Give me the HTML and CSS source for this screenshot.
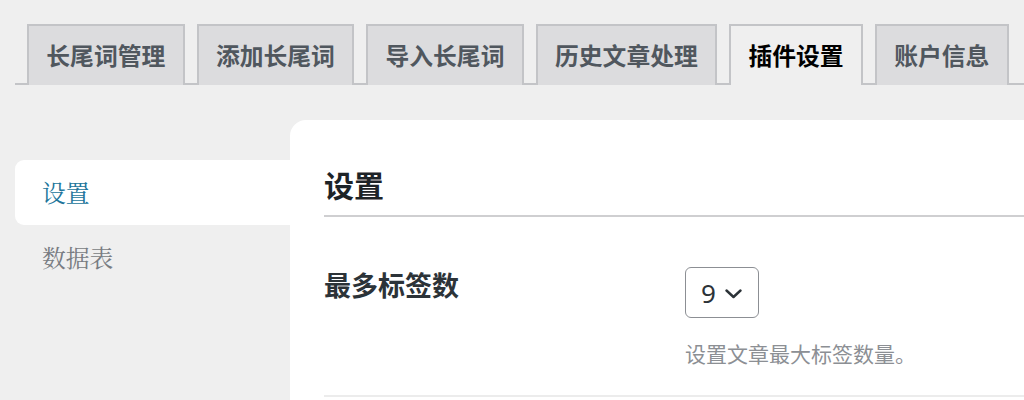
FILE: index.html
```html
<!DOCTYPE html>
<html lang="zh-CN">
<head>
<meta charset="utf-8">
<link rel="stylesheet" href="styles.css">
</head>
<body>
<div class="wrap">
  <nav class="tabs">
    <a class="tab">长尾词管理</a>
    <a class="tab">添加长尾词</a>
    <a class="tab">导入长尾词</a>
    <a class="tab">历史文章处理</a>
    <a class="tab active">插件设置</a>
    <a class="tab">账户信息</a>
  </nav>
  <div class="layout">
    <aside class="side">
      <div class="side-item current">设置</div>
      <div class="side-item">数据表</div>
    </aside>
    <main class="panel">
      <h2 class="title">设置</h2>
      <div class="row">
        <div class="label">最多标签数</div>
        <div class="field">
          <div class="select">
            <span class="val">9</span>
            <svg class="chev" width="17" height="10" viewBox="0 0 17 10"><path d="M1.5 1.5 L8.5 8 L15.5 1.5" fill="none" stroke="#2c3338" stroke-width="2.4" stroke-linecap="round" stroke-linejoin="round"/></svg>
          </div>
          <p class="desc">设置文章最大标签数量。</p>
        </div>
      </div>
    </main>
  </div>
</div>
</body>
</html>
```
FILE: styles.css
```css
html, body {
  margin: 0;
  padding: 0;
  background: #efefef;
  font-family: "Noto Sans CJK SC", "Noto Sans", sans-serif;
  overflow: hidden;
}
.wrap {
  padding-left: 15px;
}
.tabs {
  display: flex;
  gap: 12px;
  margin-top: 24px;
  padding-left: 12px;
  border-bottom: 2px solid #c3c4c7;
  height: 59px;
}
.tab {
  display: block;
  box-sizing: border-box;
  height: 61px;
  padding: 0 17.3px;
  border: 2px solid #c3c4c7;
  border-bottom: none;
  background: #dcdcde;
  color: #50575e;
  font-size: 23.8px;
  font-weight: 700;
  line-height: 57px;
  white-space: nowrap;
}
.tab.active {
  background: #efefef;
  color: #000;
  height: 61px;
  position: relative;
  z-index: 1;
}
.layout {
  display: flex;
  margin-top: 35px;
}
.side {
  width: 275px;
  flex: none;
  padding-top: 40px;
}
.side-item {
  height: 65px;
  line-height: 65px;
  padding-left: 27px;
  font-size: 23.8px;
  color: #787c82;
  font-family: "Noto Serif CJK SC", "Noto Sans CJK SC", serif;
}
.side-item.current {
  background: #fff;
  color: #21759b;
  border-radius: 9px 0 0 9px;
}
.panel {
  flex: 1;
  background: #fff;
  border-top-left-radius: 16px;
  padding-left: 34px;
  height: 300px;
}
.title {
  margin: 0;
  padding-top: 45px;
  padding-bottom: 11px;
  font-size: 30px;
  line-height: 39px;
  font-weight: 700;
  color: #1d2327;
  border-bottom: 2px solid #cfcfd1;
}
.row {
  display: flex;
  padding-top: 50px;
  padding-bottom: 26px;
  border-bottom: 2px solid #ececec;
}
.label {
  width: 361px;
  flex: none;
  font-size: 27px;
  line-height: 36px;
  font-weight: 700;
  color: #2c3338;
}
.field {
  display: flex;
  flex-direction: column;
  align-items: flex-start;
}
.select {
  box-sizing: border-box;
  width: 74px;
  height: 51px;
  border: 1.5px solid #8c8f94;
  border-radius: 6px;
  display: flex;
  align-items: center;
  padding-left: 15px;
  gap: 9px;
}
.val {
  font-family: "Noto Sans", sans-serif;
  font-size: 26px;
  color: #2c3338;
  line-height: 1;
}
.chev {
  margin-top: 2px;
}
.desc {
  margin: 19px 0 0;
  font-size: 21px;
  line-height: 32px;
  color: #8c8f94;
}
```
